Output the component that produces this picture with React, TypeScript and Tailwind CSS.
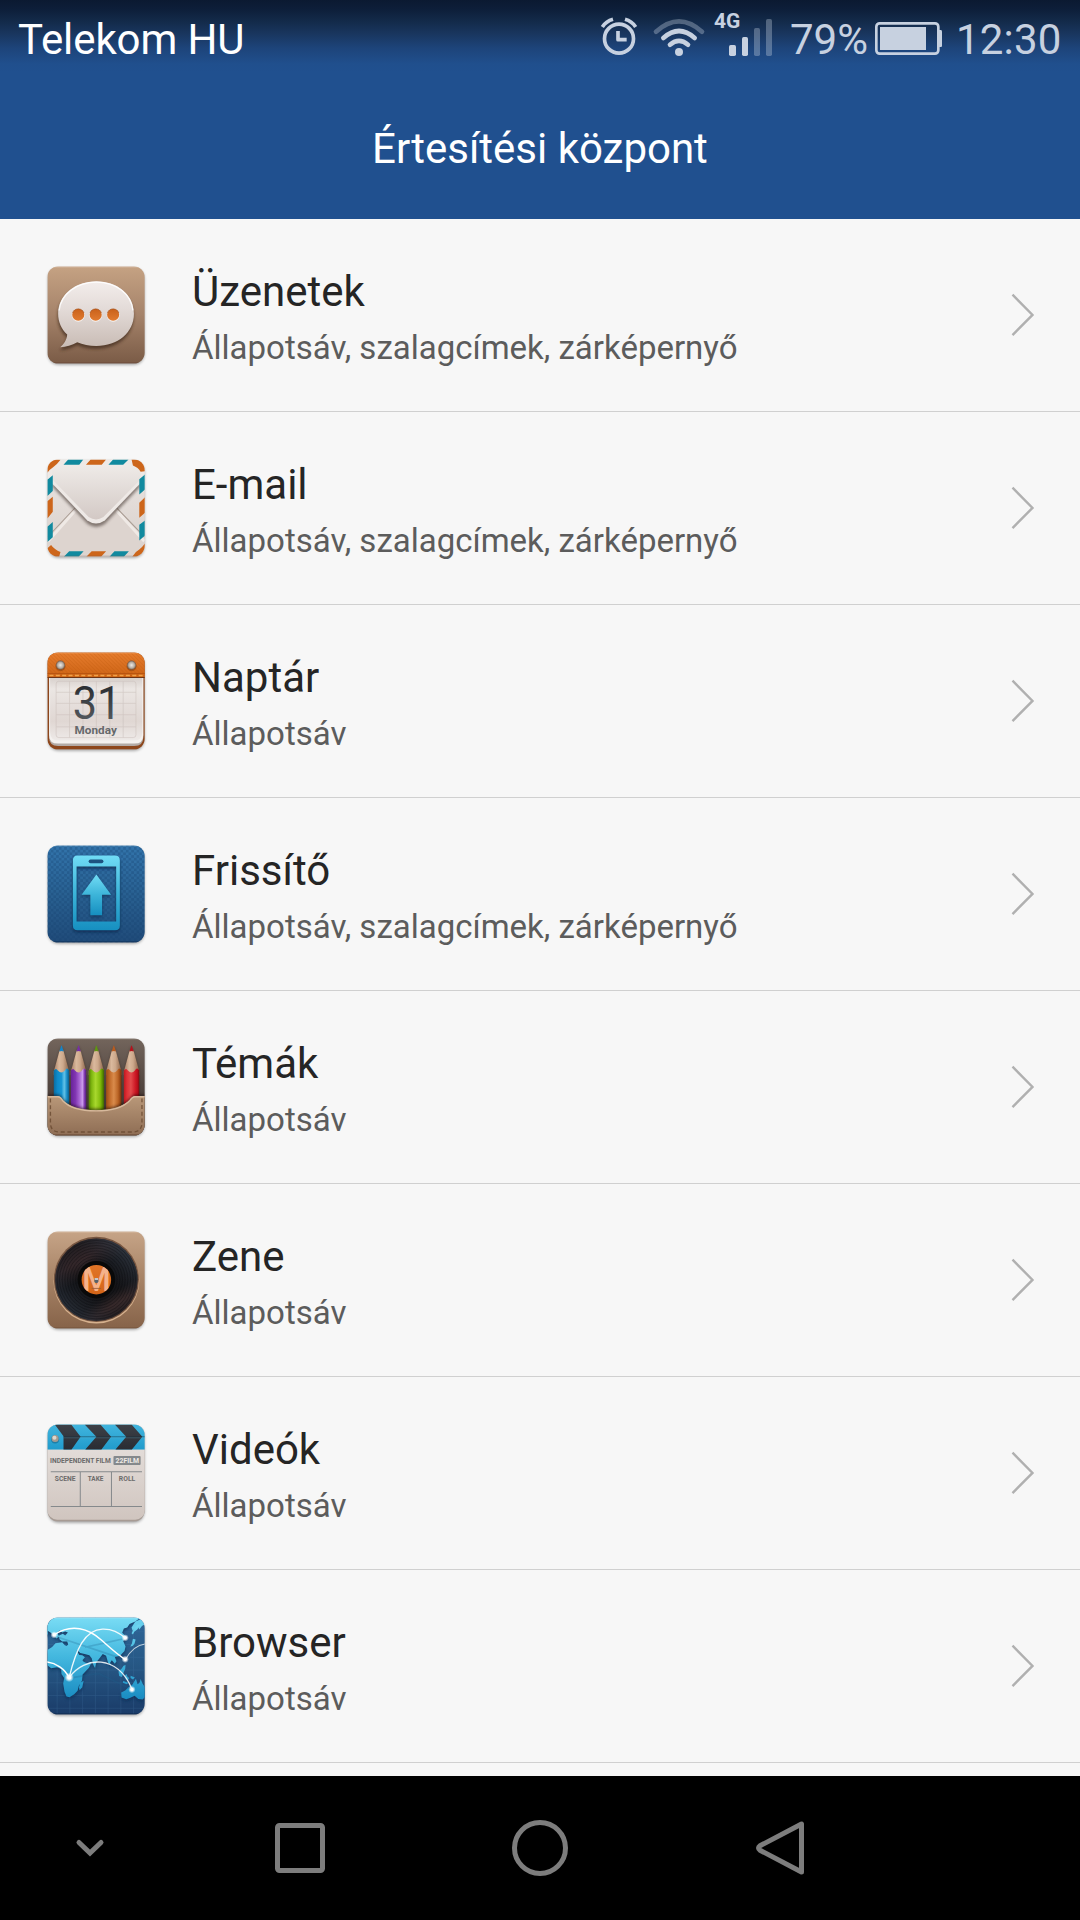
import type { ReactNode } from "react";

/* ---------- app icon tile ---------- */

function Tile({ id, children }: { id: string; children: ReactNode }) {
  return (
    <svg viewBox="0 0 360 360" className="block h-[120px] w-[120px] shrink-0" aria-hidden="true">
      <defs>
        <clipPath id={`${id}-clip`}>
          <rect x="37" y="34.5" width="292" height="291" rx="32" />
        </clipPath>
        <filter id={`${id}-blur`} x="-20%" y="-20%" width="140%" height="140%">
          <feGaussianBlur stdDeviation="4" />
        </filter>
      </defs>
      <rect x="39" y="40" width="289" height="289" rx="31" fill="#000" opacity="0.35" filter={`url(#${id}-blur)`} />
      <g clipPath={`url(#${id}-clip)`}>
        <g transform="translate(-1 -1) scale(1.006)">{children}</g>
      </g>
    </svg>
  );
}

function Gradient({ id, stops, horizontal }: { id: string; stops: [number, string][]; horizontal?: boolean }) {
  return (
    <linearGradient id={id} x1="0" y1="0" x2={horizontal ? "1" : "0"} y2={horizontal ? "0" : "1"}>
      {stops.map(([offset, color]) => (
        <stop key={offset} offset={offset} stopColor={color} />
      ))}
    </linearGradient>
  );
}

function MessagesIcon() {
  const bubble =
    "M184 79c64 0 112 41 112 97s-48 96-112 96c-21 0-41-4-57-11-16 9-33 14-51 15 11-9 20-22 21-38-17-16-27-38-27-62 0-56 50-97 114-97z";
  return (
    <Tile id="msg">
      <defs>
        <Gradient id="msg-bg" stops={[[0, "#c5a283"], [0.5, "#a5836a"], [1, "#7a5b46"]]} />
        <Gradient id="msg-b" stops={[[0, "#f3edeb"], [0.4, "#e4dcd9"], [1, "#c9bcb5"]]} />
        <Gradient id="msg-d" stops={[[0, "#c9611a"], [1, "#e17b30"]]} />
      </defs>
      <rect x="38" y="35" width="291" height="290" fill="url(#msg-bg)" />
      <rect x="38" y="35" width="291" height="3" fill="#d6bba2" />
      <rect x="38" y="321" width="291" height="4" fill="#67493a" opacity="0.6" />
      <path d={bubble} transform="translate(-1 9)" fill="#3f2a1d" opacity="0.7" filter="url(#msg-blur)" />
      <path d={bubble} fill="url(#msg-b)" />
      <path d="M73 166c6-49 53-84 111-84s104 35 109 84" fill="none" stroke="#fff" strokeWidth="4" opacity="0.85" />
      {[130, 182, 234].map((x) => (
        <g key={x}>
          <circle cx={x} cy="181" r="19" fill="#fff" opacity="0.75" />
          <circle cx={x} cy="179" r="18" fill="url(#msg-d)" />
          <path d={`M${x - 17} 174a18 18 0 0 1 34 0`} fill="none" stroke="#9c4d1b" strokeWidth="2.5" opacity="0.7" />
        </g>
      ))}
    </Tile>
  );
}

function EmailIcon() {
  return (
    <Tile id="mail">
      <defs>
        <Gradient id="mail-bg" stops={[[0, "#ebe6e3"], [1, "#d8cfca"]]} />
        <Gradient id="mail-f" stops={[[0, "#efebe8"], [1, "#d3c9c5"]]} />
      </defs>
      <rect x="38" y="35" width="291" height="290" fill="url(#mail-bg)" />
      <path d="M38 325V272L120 181l63 48 62-48 84 91v53z" fill="#ddd4cf" />
      <path d="M40 272l80-91M327 272l-82-91" stroke="#efe9e5" strokeWidth="9" transform="translate(0 7)" />
      <path d="M40 265l80-85M327 265l-82-85" stroke="#a99c93" strokeWidth="3" />
      <path
        d="M46 101l112 119q25 17 51 0L322 100"
        fill="#443731"
        opacity="0.6"
        filter="url(#mail-blur)"
        transform="translate(0 8)"
      />
      <path d="M38 92V35h291v57L209 217q-26 18-52 0z" fill="#eee9e6" />
      <path d="M52 94V50h264v44L205 207q-22 14-44 0z" fill="url(#mail-f)" />
      <path d="M38 75V35h20l19 1q-10 14-23 23-10 6-16 16z" fill="#cd661b" />
      <path d="M289 35h25l15 18v17l-13 2q-7-13-23-19z" fill="#cd661b" />
      <path d="M38 300l11-10q10 14 28 21l-4 14H38z" fill="#cd661b" />
      <path d="M329 286v39h-38q8-14 21-21 7-5 17-18z" fill="#cd661b" />
      <g fill="#cd661b">
        <path d="M167 35h46l-13 16h-47zM170 309h43l-15 16h-44zM38 160l16-14v45l-16 20zM312 164l17-16v46l-17 15z" />
      </g>
      <g fill="#118a9f">
        <path d="M100 35h45l-12 16H86zM234 35h46l-16 16h-44zM103 309h43l-15 16H87zM238 309h43l-15 16h-43z" />
        <path d="M38 96l16-14v47l-16 15zM312 94l17-14v45l-17 15zM38 236l16-14v45l-16 14zM312 230l17-13v45l-17 15z" />
      </g>
      <rect x="38" y="322" width="291" height="3" fill="#745b4f" opacity="0.35" />
    </Tile>
  );
}

function CalendarIcon() {
  return (
    <Tile id="cal">
      <defs>
        <Gradient id="cal-o" stops={[[0, "#e77d2e"], [1, "#cc6214"]]} />
        <Gradient id="cal-p" stops={[[0, "#d4ccc8"], [0.2, "#ebe6e3"], [0.7, "#e0d7d3"], [1, "#eeeae8"]]} />
        <Gradient id="cal-t" stops={[[0, "#202327"], [1, "#60656a"]]} />
        <radialGradient id="cal-s">
          <stop offset="0" stopColor="#efebe6" />
          <stop offset="0.65" stopColor="#b5aca2" />
          <stop offset="1" stopColor="#725746" />
        </radialGradient>
        <pattern id="cal-h" width="8" height="8" patternUnits="userSpaceOnUse" patternTransform="rotate(-45)">
          <rect width="2.5" height="8" fill="#b95509" opacity="0.3" />
        </pattern>
      </defs>
      <rect x="38" y="35" width="291" height="290" fill="#8d461b" />
      <path d="M43 105h281v183q0 26-27 26H70q-27 0-27-26z" fill="#b3aaa5" />
      <path d="M43 105h281v176q0 26-27 26H70q-27 0-27-26z" fill="#f4f1ef" />
      <path d="M46 105h275v167q0 26-27 26H73q-27 0-27-26z" fill="url(#cal-p)" />
      <g stroke="#c7bcb7" strokeWidth="2" fill="none" opacity="0.7">
        <rect x="64" y="121" width="238" height="168" rx="8" />
        <path d="M64 154h238M64 187h238M64 221h238M64 257h238M104 121v168M144 121v168M184 121v168M224 121v168M264 121v168" />
      </g>
      <rect x="38" y="35" width="291" height="76" fill="url(#cal-o)" />
      <rect x="38" y="35" width="291" height="76" fill="url(#cal-h)" />
      <rect x="38" y="35" width="291" height="3" fill="#f3a366" opacity="0.7" />
      <path d="M38 98h291" stroke="#b85510" strokeWidth="3" />
      <path d="M44 104h284" stroke="#efa149" strokeWidth="4" strokeDasharray="12 7" />
      <path d="M38 110h291" stroke="#6d3515" strokeWidth="3" />
      {[77, 289].map((x) => (
        <g key={x}>
          <circle cx={x} cy="76" r="15" fill="#813d0d" opacity="0.5" />
          <circle cx={x} cy="73" r="13.5" fill="url(#cal-s)" />
        </g>
      ))}
      <text x="186" y="235" textAnchor="middle" fontFamily="Roboto, sans-serif" fontWeight="400" fontSize="139" textLength="145" lengthAdjust="spacingAndGlyphs" fill="url(#cal-t)">
        31
      </text>
      <text x="182" y="277" textAnchor="middle" fontFamily="Roboto, sans-serif" fontWeight="700" fontSize="35" textLength="127" fill="#65686b">
        Monday
      </text>
    </Tile>
  );
}

function UpdaterIcon() {
  return (
    <Tile id="upd">
      <defs>
        <Gradient id="upd-bg" stops={[[0, "#3274ab"], [0.5, "#296192"], [1, "#204b79"]]} />
        <Gradient id="upd-p" stops={[[0, "#71dcf5"], [0.5, "#3cb4d9"], [1, "#168fc0"]]} />
        <pattern id="upd-c" width="16" height="16" patternUnits="userSpaceOnUse">
          <path d="M0 0h8v8H0zM8 8h8v8H8z" fill="#15406e" opacity="0.3" />
        </pattern>
      </defs>
      <rect x="38" y="35" width="291" height="290" fill="url(#upd-bg)" />
      <rect x="38" y="35" width="291" height="290" fill="url(#upd-c)" />
      <rect x="38" y="35" width="291" height="3" fill="#6498c0" opacity="0.7" />
      <rect x="38" y="321" width="291" height="4" fill="#102b50" opacity="0.6" />
      <path
        d="M128 65h112q14 0 14 14v195q0 14-14 14H128q-14 0-14-14V79q0-14 14-14zM125 98v164h118V98z"
        fillRule="evenodd"
        fill="#0b274b"
        opacity="0.75"
        filter="url(#upd-blur)"
        transform="translate(0 6)"
      />
      <path
        d="M128 65h112q14 0 14 14v195q0 14-14 14H128q-14 0-14-14V79q0-14 14-14zM125 98v164h118V98z"
        fillRule="evenodd"
        fill="url(#upd-p)"
      />
      <rect x="161" y="77" width="44" height="11" rx="5.5" fill="#1d5380" />
      <path d="M184 128l44 60h-27v61h-35v-61h-26z" fill="#0c2c50" opacity="0.6" filter="url(#upd-blur)" />
      <path d="M184 122l44 60h-27v61h-35v-61h-26z" fill="url(#upd-p)" />
    </Tile>
  );
}

const PENCILS: { x: number; tip: string; stops: [number, string][] }[] = [
  { x: 57, tip: "#1684c7", stops: [[0, "#0a6ea4"], [0.25, "#0e8bcb"], [0.5, "#1695d3"], [0.68, "#62c2e7"], [0.85, "#178cc7"], [1, "#075b89"]] },
  { x: 108, tip: "#7630a5", stops: [[0, "#68239a"], [0.3, "#8136b2"], [0.55, "#a865d3"], [0.75, "#cb9cec"], [0.88, "#843eb2"], [1, "#4d1678"]] },
  { x: 161, tip: "#609612", stops: [[0, "#547f00"], [0.2, "#80b811"], [0.45, "#a8d82d"], [0.75, "#82bb0d"], [0.85, "#679e00"], [1, "#3e6500"]] },
  { x: 213, tip: "#b85c20", stops: [[0, "#9d4b15"], [0.25, "#c36d2c"], [0.5, "#d98b4b"], [0.75, "#bd6829"], [0.85, "#a9541a"], [1, "#6f300c"]] },
  { x: 266, tip: "#b5131d", stops: [[0, "#be1821"], [0.2, "#df3035"], [0.45, "#e34a4c"], [0.75, "#cd1925"], [0.88, "#b80e1b"], [1, "#790b10"]] },
];

function ThemesIcon() {
  const pocket = "M38 207h31q8 0 14 11c17 19 52 31 100 31s83-12 101-31q8-11 15-11h30v118H38z";
  return (
    <Tile id="thm">
      <defs>
        <Gradient id="thm-bg" stops={[[0, "#73655c"], [0.5, "#51453f"], [1, "#3b302c"]]} />
        <Gradient id="thm-w" horizontal stops={[[0, "#a67d62"], [0.35, "#dab99d"], [0.6, "#cda98c"], [1, "#896147"]]} />
        <Gradient id="thm-k" stops={[[0, "#b99879"], [1, "#8e6d54"]]} />
        {PENCILS.map((p) => (
          <Gradient key={p.x} id={`thm-${p.x}`} horizontal stops={p.stops} />
        ))}
      </defs>
      <rect x="38" y="35" width="291" height="290" fill="url(#thm-bg)" />
      <rect x="38" y="35" width="291" height="3" fill="#978a81" opacity="0.7" />
      {PENCILS.map((p) => (
        <g key={p.x} transform={`translate(${p.x} 0)`}>
          <path d="M4 128L23 60l20 68v130H4z" fill="#211610" opacity="0.5" filter="url(#thm-blur)" />
          <path d="M0 134L17 72h12l17 62v10H0z" fill="url(#thm-w)" />
          <path d="M16.5 74L22 57q1-2 2 0l5.5 17q-6-3-13 0z" fill={p.tip} />
          <path d="M0 131q7-10 12 0 11 12 21 0 6-12 13 0v130H0z" fill={`url(#thm-${p.x})`} />
        </g>
      ))}
      <path d={pocket} transform="translate(0 -4)" fill="#1c110b" opacity="0.6" filter="url(#thm-blur)" />
      <path d={pocket} fill="url(#thm-k)" />
      <path d="M38 209h31q8 0 14 11c17 19 52 31 100 31s83-12 101-31q8-11 15-11h30" fill="none" stroke="#d7b99c" strokeWidth="4" />
      <path d="M47 214v72q0 28 27 28h218q28 0 28-28v-72" fill="none" stroke="#68482f" strokeWidth="4" strokeDasharray="12 8" opacity="0.8" />
      <rect x="38" y="321" width="291" height="4" fill="#5b3d2b" opacity="0.6" />
    </Tile>
  );
}

function MusicIcon() {
  return (
    <Tile id="mus">
      <defs>
        <Gradient id="mus-bg" stops={[[0, "#c6a487"], [0.5, "#a68265"], [1, "#866349"]]} />
        <Gradient id="mus-o" stops={[[0, "#e17427"], [1, "#d46518"]]} />
        <linearGradient id="mus-d" x1="0.2" y1="0" x2="0.8" y2="1">
          <stop offset="0" stopColor="#191a1e" />
          <stop offset="0.25" stopColor="#34272a" />
          <stop offset="0.42" stopColor="#111215" />
          <stop offset="0.7" stopColor="#151518" />
          <stop offset="0.82" stopColor="#382a2b" />
          <stop offset="1" stopColor="#16171b" />
        </linearGradient>
        <linearGradient id="mus-l" x1="0.9" y1="0.1" x2="0.1" y2="0.9">
          <stop offset="0" stopColor="#353d48" />
          <stop offset="0.4" stopColor="#22262e" stopOpacity="0" />
          <stop offset="0.6" stopColor="#22262e" stopOpacity="0" />
          <stop offset="1" stopColor="#2d343e" />
        </linearGradient>
        <clipPath id="mus-c">
          <circle cx="184" cy="179" r="44" />
        </clipPath>
      </defs>
      <rect x="38" y="35" width="291" height="290" fill="url(#mus-bg)" />
      <rect x="38" y="35" width="291" height="3" fill="#dbc1a9" />
      <rect x="38" y="321" width="291" height="4" fill="#6c4b36" opacity="0.5" />
      <circle cx="184" cy="182" r="128" fill="#d6b18e" />
      <circle cx="184" cy="178" r="127" fill="#775641" />
      <circle cx="184" cy="179" r="123" fill="url(#mus-d)" />
      <circle cx="184" cy="179" r="123" fill="url(#mus-l)" />
      {[62, 70, 78, 86, 94, 102, 110, 117].map((r) => (
        <circle key={r} cx="184" cy="179" r={r} fill="none" stroke="#07080a" strokeWidth="2" opacity="0.45" />
      ))}
      <circle cx="184" cy="179" r="56" fill="#090909" />
      <circle cx="184" cy="179" r="44" fill="url(#mus-o)" />
      <g clipPath="url(#mus-c)">
        <text x="184" y="214" textAnchor="middle" fontFamily="Roboto, sans-serif" fontWeight="500" fontSize="100" textLength="86" lengthAdjust="spacingAndGlyphs" fill="#f4b28b">
          M
        </text>
      </g>
      <path d="M170 205h28" stroke="#9a5a36" strokeWidth="2.5" />
      <rect x="178" y="174" width="12" height="15" rx="5" fill="#57616b" />
      <path d="M179 177h10" stroke="#e5e9ec" strokeWidth="4" />
    </Tile>
  );
}

function VideosIcon() {
  return (
    <Tile id="vid">
      <defs>
        <Gradient id="vid-bg" stops={[[0, "#e9e4e1"], [1, "#d0c5bf"]]} />
        <Gradient id="vid-b" stops={[[0, "#42b5de"], [1, "#209bcc"]]} />
        <Gradient id="vid-k" stops={[[0, "#3d4148"], [1, "#292c33"]]} />
      </defs>
      <rect x="38" y="35" width="291" height="290" fill="#a79b94" />
      <rect x="38" y="35" width="291" height="284" rx="29" fill="url(#vid-bg)" />
      <rect x="38" y="35" width="291" height="75" fill="url(#vid-b)" />
      <g fill="url(#vid-k)">
        <path d="M60 35h49l28 37-27 38H86V70z" />
        <path d="M149 35h47l32 37-29 38h-48l33-38z" />
        <path d="M239 35h50l32 37-31 38h-49l32-38z" />
      </g>
      <path d="M86 72h243" stroke="#16303e" strokeWidth="2.5" opacity="0.6" />
      <path d="M86 75h243" stroke="#68b9d5" strokeWidth="1.5" opacity="0.5" />
      <path d="M38 35h291" stroke="#8bd7ef" strokeWidth="4" opacity="0.6" />
      <circle cx="61" cy="80" r="12" fill="#17658a" opacity="0.6" />
      <circle cx="61" cy="77" r="10.5" fill="#a39a91" />
      <circle cx="59" cy="75" r="6" fill="#dfd7cc" />
      <g fontFamily="Roboto, sans-serif" fontWeight="700" fill="#6c6b6b">
        <text x="46" y="151" fontSize="23" textLength="181" lengthAdjust="spacingAndGlyphs">INDEPENDENT FILM</text>
        <text x="60" y="204" fontSize="24" textLength="62" lengthAdjust="spacingAndGlyphs">SCENE</text>
        <text x="158" y="204" fontSize="24" textLength="47" lengthAdjust="spacingAndGlyphs">TAKE</text>
        <text x="251" y="204" fontSize="24" textLength="49" lengthAdjust="spacingAndGlyphs">ROLL</text>
      </g>
      <rect x="235" y="129" width="81" height="27" rx="3" fill="#85898c" />
      <text x="241" y="151" fontFamily="Roboto, sans-serif" fontWeight="700" fontSize="23" textLength="70" lengthAdjust="spacingAndGlyphs" fill="#eeeae7">
        22FILM
      </text>
      <path d="M48 176h272M48 280h272M136 176v104M229 176v104" stroke="#85898c" strokeWidth="3" />
    </Tile>
  );
}

function BrowserIcon() {
  const land =
    "M38 35h278l-16 12-17 8-7 10-10 3-5 13 8 8 8 5-7 5-6 6 7 17-3 13-14 15-15 3 5 13-5 7-9-10-5 7 3 10-9-10-6-21-10-5-9 12-10 13-4 17-5-9-5-20-7-9-14-4-13-3-9-8-8-3 5 11 9 6 9 1 8 6-9 10-17 8-8-7-9-17-10-16-5-9 8-7-3-9-15 0-8-7-2-10 12-6 7 5 8-9-8-3-8 3-10-6-5 9 5 9-8 6-7-9-10-8-9-6 1 10-7 4-6-8-11-3-9 7-8-6-6-1zM38 132l14-9 10-11 20-3 8 9 14 5 15-1 7 12 10 20 10 13 9 5 15-4-8 17-19 20-2 19-9 14-4 16-10 10-14 9-9-2-6-14-4-25 3-16-8-12-1-15-12-5-18 3-11-9zM146 224l-4 19-8 9-2-9 4-13zM302 218l5 16 6-5 3-10 6 14 7 10v29l-7 8-13-2-11-9-14 6-11 4-14-5-1-15 12-6 11-11 10-6z";
  const islands =
    "M250 196l9-8 6-9 6-2-1 11-5 12-5 13-8-3zM269 208l5-4 3 8 5 4-5 9-6-6zM286 209l13 5-6 6-7-4zM264 225l15 5-4 4-12-4zM289 82l6-12 8-10 7-4 5 2-9 13-9 7-4 8zM293 99l8 2-3 12-6 7-7 2 5-9z";
  return (
    <Tile id="web">
      <defs>
        <Gradient id="web-bg" stops={[[0, "#2f6799"], [0.5, "#265784"], [1, "#1a3b68"]]} />
        <linearGradient id="web-l" gradientUnits="userSpaceOnUse" x1="0" y1="35" x2="0" y2="290">
          <stop offset="0" stopColor="#79dcf4" />
          <stop offset="0.45" stopColor="#44b8df" />
          <stop offset="1" stopColor="#1688bf" />
        </linearGradient>
        <radialGradient id="web-g">
          <stop offset="0.35" stopColor="#fff" />
          <stop offset="1" stopColor="#fff" stopOpacity="0" />
        </radialGradient>
      </defs>
      <rect x="38" y="35" width="291" height="290" fill="url(#web-bg)" />
      <path d="M67 35v290M105 35v290M143 35v290M181 35v290M219 35v290M257 35v290M295 35v290M38 78h291M38 116h291M38 154h291M38 192h291M38 230h291M38 268h291M38 306h291" stroke="#4d7fad" strokeWidth="2" opacity="0.3" />
      <path d={land} fill="#0c2d54" opacity="0.7" filter="url(#web-blur)" transform="translate(0 6)" />
      <path d={land} fill="url(#web-l)" />
      <path d="M300 47l29-12v20l-9 6-8 10-4-8-8 4-8 8-3-10z" fill="#67cfed" />
      <path d={islands} fill="url(#web-l)" />
      <path d="M61 91l209 70M103 216l88-14 97 47M150 124l60-13 62-14" fill="none" stroke="#1b5f8a" strokeWidth="5" opacity="0.25" />
      <g fill="none" stroke="#fff" strokeLinecap="round">
        <path d="M58 87c54-36 104-17 139 14 25 22 46 42 72 59" strokeWidth="4.5" />
        <path d="M103 214c20-83 47-143 99-144 30-1 48 10 68 26" strokeWidth="4" opacity="0.9" />
        <path d="M103 214c46-64 145-69 187 35" strokeWidth="4" opacity="0.85" />
        <path d="M38 168c25 3 52 20 65 47" strokeWidth="4.5" />
        <path d="M271 160c13-23 31-43 58-46" strokeWidth="3" opacity="0.7" />
      </g>
      {[[58, 87, 11], [270, 96, 11], [270, 160, 11], [103, 214, 14], [290, 250, 11]].map(([x, y, r]) => (
        <circle key={`${x}-${y}`} cx={x} cy={y} r={r} fill="url(#web-g)" />
      ))}
      <rect x="38" y="35" width="291" height="3" fill="#b0eafa" opacity="0.6" />
      <rect x="38" y="321" width="291" height="4" fill="#0d2548" opacity="0.6" />
    </Tile>
  );
}

/* ---------- status bar ---------- */

function StatusBar() {
  return (
    <div className="flex h-[80px] items-start bg-[linear-gradient(to_bottom,#0b1931_0px,#0d1e39_9px,#132a49_21px,#19365f_34px,#1d447a_48px,#204f8d_64px,#20508f_72px)] text-[42px] leading-[50px]">
      <span className="w-[581px] shrink-0 pt-[15px] pl-[18px] tracking-[-0.1px] text-white">Telekom HU</span>
      <div className="flex w-[499px] shrink-0 items-start text-[#c7d1e0]">
        <svg viewBox="57 0 120 240" className="ml-[18px] h-[80px] w-[40px]" fill="none" stroke="currentColor">
          <circle cx="117" cy="116" r="43.5" strokeWidth="11" />
          <path d="M114 93v26h26" strokeWidth="11" strokeLinejoin="round" />
          <path d="M67 81q11-17 32-23M167 81q-11-17-32-23" strokeWidth="11" />
        </svg>
        <svg viewBox="216 0 162 240" className="ml-[13px] h-[80px] w-[54px]" fill="none" stroke="currentColor" strokeWidth="14" strokeLinecap="round">
          <path d="M228 95q69-62 138 0" opacity="0.35" />
          <path d="M250 114q47-42 94 0" />
          <path d="M270 134q27-23 54 0" />
          <circle cx="297" cy="156" r="12" fill="currentColor" stroke="none" />
        </svg>
        <div className="relative ml-[8px] h-[80px] w-[62px]">
          <span className="absolute top-[9px] left-0 text-[21px] leading-[24px] font-bold">4G</span>
          <svg viewBox="402 0 186 240" className="h-[80px] w-[62px]" fill="currentColor">
            <rect x="447" y="135" width="21" height="33" rx="5" />
            <rect x="486" y="111" width="18" height="57" rx="5" />
            <rect x="522" y="84" width="18" height="84" rx="5" opacity="0.35" />
            <rect x="558" y="57" width="18" height="111" rx="5" opacity="0.35" />
          </svg>
        </div>
        <span className="ml-[14px] w-[83px] pt-[15px]">79%</span>
        <svg viewBox="879 0 213 240" className="h-[80px] w-[71px]" fill="none">
          <rect x="889" y="70" width="186" height="91" rx="10" stroke="currentColor" strokeWidth="8" />
          <rect x="900" y="81" width="138" height="69" fill="currentColor" />
          <path d="M1077 90h6q3 0 3 5v42q0 4-3 4h-6z" fill="currentColor" />
        </svg>
        <span className="ml-[12px] pt-[15px] tracking-[0.2px]">12:30</span>
      </div>
    </div>
  );
}

/* ---------- list ---------- */

const FULL = "Állapotsáv, szalagcímek, zárképernyő";
const BAR = "Állapotsáv";

const APPS: { name: string; detail: string; icon: ReactNode }[] = [
  { name: "Üzenetek", detail: FULL, icon: <MessagesIcon /> },
  { name: "E-mail", detail: FULL, icon: <EmailIcon /> },
  { name: "Naptár", detail: BAR, icon: <CalendarIcon /> },
  { name: "Frissítő", detail: FULL, icon: <UpdaterIcon /> },
  { name: "Témák", detail: BAR, icon: <ThemesIcon /> },
  { name: "Zene", detail: BAR, icon: <MusicIcon /> },
  { name: "Videók", detail: BAR, icon: <VideosIcon /> },
  { name: "Browser", detail: BAR, icon: <BrowserIcon /> },
];

function AppRow({ name, detail, icon }: { name: string; detail: string; icon: ReactNode }) {
  return (
    <li className="flex h-[193px] items-center border-b border-[#d0d0d0] pl-[35px]">
      {icon}
      <div className="ml-[37px] flex grow flex-col gap-[11px] self-start pt-[48px]">
        <span className="text-[42px] leading-[50px] text-[#252525]">{name}</span>
        <span className="text-[33px] leading-[40px] text-[#5c5c5c]">{detail}</span>
      </div>
      <svg viewBox="0 0 26 46" className="mr-[44px] h-[46px] w-[26px] shrink-0" fill="none" stroke="#b0b0b0" strokeWidth="2.4">
        <path d="M2.5 2.7L22.5 22.9L2.5 43.1" />
      </svg>
    </li>
  );
}

function NavigationBar() {
  return (
    <nav className="flex h-[144px] shrink-0 items-center bg-black pl-[60px]">
      <svg viewBox="0 0 60 60" className="h-[60px] w-[60px]" fill="none" stroke="#7d7d7d" strokeWidth="5">
        <path d="M19 24.5L30 35L41 24.5" strokeLinecap="round" />
      </svg>
      <svg viewBox="0 0 60 60" className="ml-[150px] h-[60px] w-[60px]" fill="none" stroke="#7d7d7d" strokeWidth="5">
        <rect x="7.5" y="7.5" width="45" height="45" rx="2" />
      </svg>
      <svg viewBox="0 0 60 60" className="ml-[180px] h-[60px] w-[60px]" fill="none" stroke="#7d7d7d" strokeWidth="5">
        <circle cx="30" cy="30" r="25.5" />
      </svg>
      <svg viewBox="0 0 60 60" className="ml-[180px] h-[60px] w-[60px]" fill="none" stroke="#7d7d7d" strokeWidth="5" strokeLinejoin="round">
        <path d="M51.5 6V54L10 32.2Q7 30 10 27.8Z" />
      </svg>
    </nav>
  );
}

export default function App() {
  return (
    <div className="flex h-[1920px] w-[1080px] flex-col overflow-hidden bg-[#f7f7f7] font-[Roboto,sans-serif]">
      <header className="h-[219px] shrink-0 bg-[#20508f]">
        <StatusBar />
        <h1 className="pt-[44px] text-center text-[42px] leading-[50px] text-white">Értesítési központ</h1>
      </header>
      <ul className="h-[1557px] shrink-0 overflow-hidden">
        {APPS.map((app) => (
          <AppRow key={app.name} {...app} />
        ))}
      </ul>
      <NavigationBar />
    </div>
  );
}
